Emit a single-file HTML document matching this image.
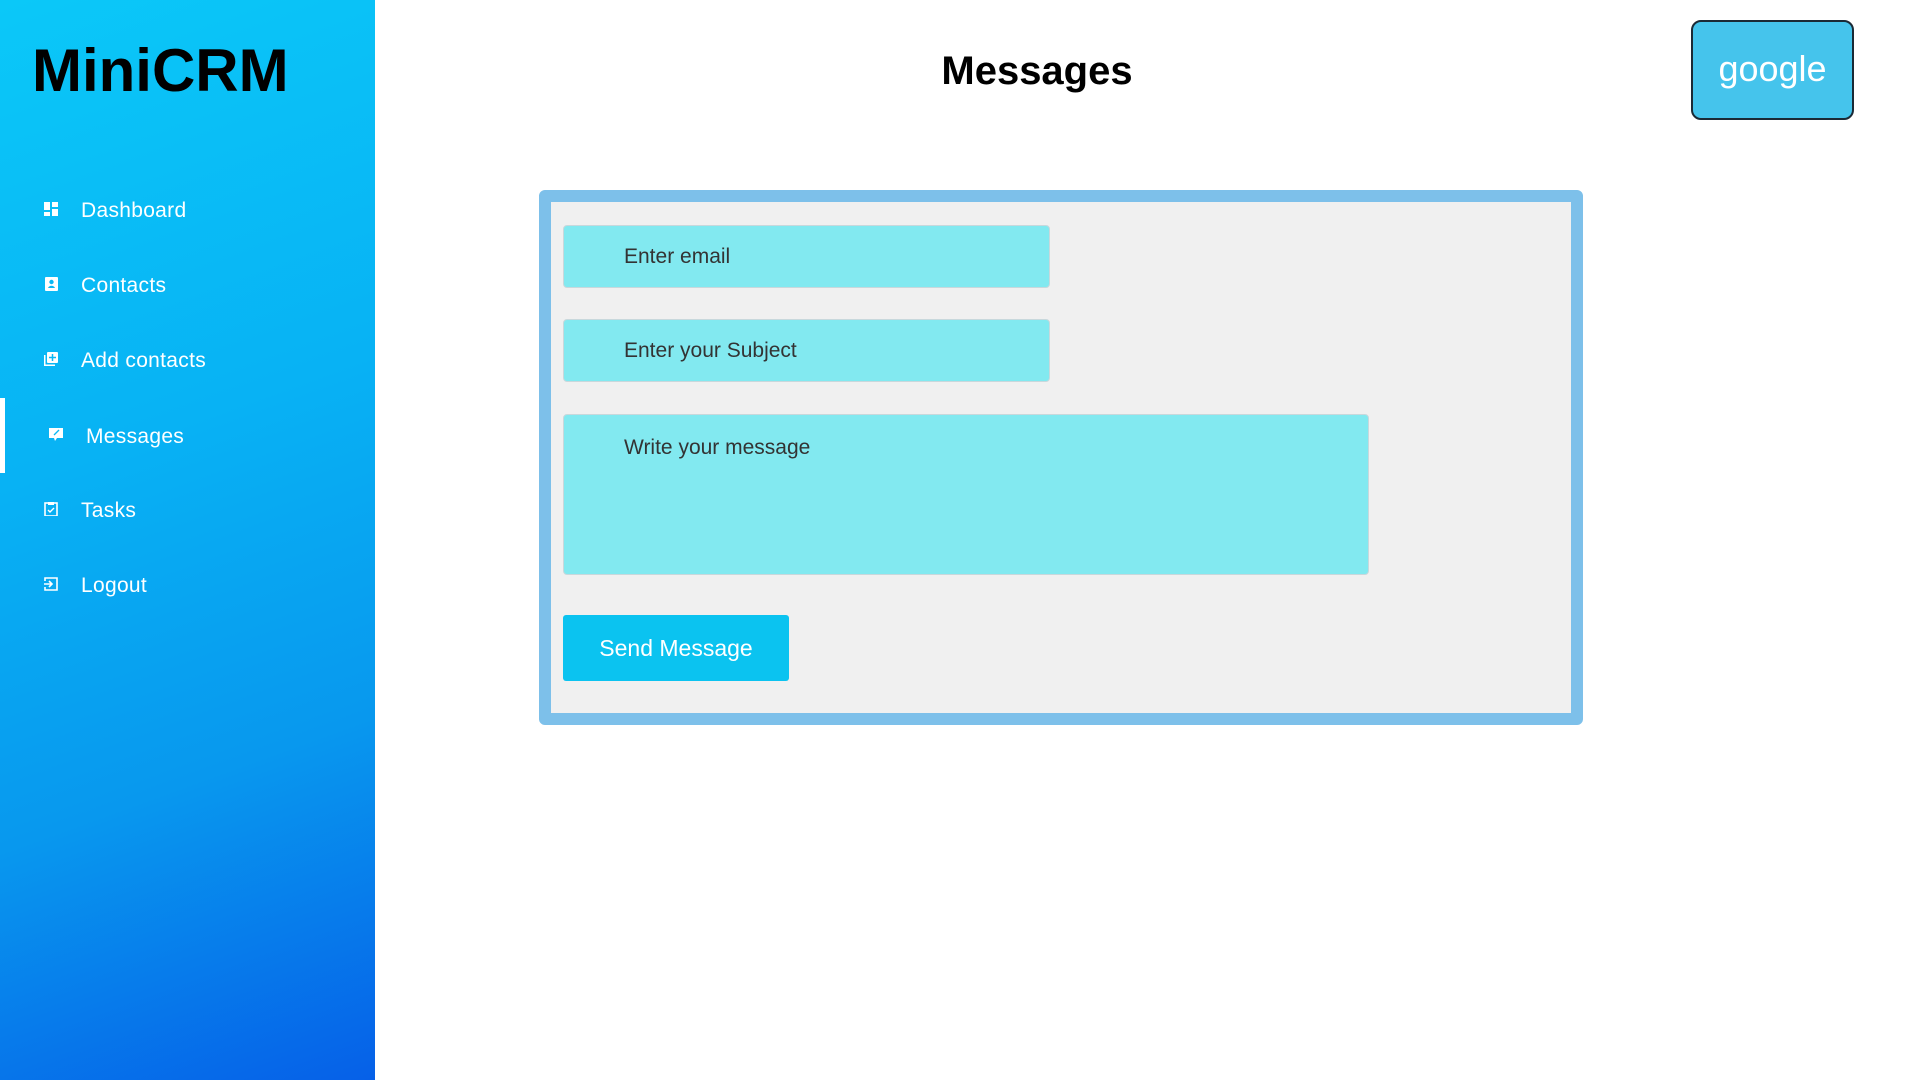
<!DOCTYPE html>
<html><head><style>
*{margin:0;padding:0;box-sizing:border-box}
body{width:1920px;height:1080px;background:#fff;font-family:"Liberation Sans",sans-serif;position:relative;overflow:hidden}
.side{position:absolute;left:0;top:0;width:375px;height:1080px;background:linear-gradient(160deg,#0bc8f8 0%,#08b2f4 40%,#0898ee 70%,#0660e8 100%)}
.logo{position:absolute;left:32px;top:36px;font-size:60px;font-weight:bold;color:#000}
.item{position:absolute;left:0;width:375px;height:40px;color:#fff;font-size:21px;letter-spacing:0.3px}
.item .ic{position:absolute;left:44px;top:11px;width:14px;height:14px}
.item span{position:absolute;left:81px;top:8px}
.bar{position:absolute;left:0;top:398px;width:5px;height:75px;background:#fff}
h1{position:absolute;left:0;width:2074px;text-align:center;top:49px;font-size:40px;font-weight:bold;color:#000}
.g{position:absolute;left:1691px;top:20px;width:163px;height:100px;background:#45c4ec;border:2px solid #1b2a36;border-radius:10px;color:#fff;font-size:36px;text-align:center;line-height:94px}
.form{position:absolute;left:539px;top:190px;width:1044px;height:535px;background:#f0f0f0;border:12px solid #7dc0ea;border-radius:6px}
.in{position:absolute;left:563px;width:487px;height:63px;background:#82e9f0;border:1px solid #c8d8dc;border-radius:4px;color:#333;font-size:21px;padding-left:60px;line-height:62px}
.ta{position:absolute;left:563px;top:414px;width:806px;height:161px;background:#82e9f0;border:1px solid #c8d8dc;border-radius:4px;color:#333;font-size:21px;padding:21px 60px}
.btn{position:absolute;left:563px;top:615px;width:226px;height:66px;background:#0bc3f0;border-radius:3px;color:#fff;font-size:23px;text-align:center;line-height:66px}
</style></head><body>
<div class="side">
<div class="logo">MiniCRM</div>
<div class="item" style="top:191px"><svg class="ic" viewBox="0 0 14 14"><rect x="0" y="0" width="6" height="8" fill="#fff"/><rect x="8" y="0" width="6" height="5" fill="#fff"/><rect x="0" y="10" width="6" height="4" fill="#fff"/><rect x="8" y="7" width="6" height="7" fill="#fff"/></svg><span>Dashboard</span></div>
<div class="item" style="top:266px"><svg class="ic" viewBox="0 0 14 14"><rect x="1" y="0" width="13" height="14" rx="1" fill="#fff"/><circle cx="7.5" cy="5" r="2.2" fill="#0ab8f5"/><path d="M4 11c1-3 6-3 7 0z" fill="#0ab8f5"/></svg><span>Contacts</span></div>
<div class="item" style="top:341px"><svg class="ic" viewBox="0 0 14 14"><path d="M0 3v11h11v-1.5H1.5V3z" fill="#fff"/><rect x="3" y="0" width="11" height="11" rx="1" fill="#fff"/><path d="M8.5 2v7M5 5.5h7" stroke="#0ab8f5" stroke-width="1.5"/></svg><span>Add contacts</span></div>
<div class="item" style="top:417px"><svg class="ic" style="left:49px" viewBox="0 0 14 14"><path d="M0 0h14v10H8l-2 3-1-3H0z" fill="#fff"/><path d="M5 7l5-5" stroke="#0ab8f5" stroke-width="1.3"/></svg><span style="left:86px">Messages</span></div>
<div class="item" style="top:491px"><svg class="ic" viewBox="0 0 14 14"><rect x="1" y="1" width="12" height="13" fill="none" stroke="#fff" stroke-width="1.6"/><rect x="4" y="0" width="6" height="3" fill="#fff"/><path d="M4 8l2 2 4-4" stroke="#fff" stroke-width="1.4" fill="none"/></svg><span>Tasks</span></div>
<div class="item" style="top:566px"><svg class="ic" viewBox="0 0 14 14"><path d="M1 4V1h12v12H1v-3" fill="none" stroke="#fff" stroke-width="1.6"/><path d="M0 7h8M5 4l3 3-3 3" stroke="#fff" stroke-width="1.6" fill="none"/></svg><span>Logout</span></div>
</div>
<div class="bar"></div>
<h1>Messages</h1>
<div class="g">google</div>
<div class="form"></div>
<div class="in" style="top:225px">Enter email</div>
<div class="in" style="top:319px">Enter your Subject</div>
<div class="ta">Write your message</div>
<div class="btn">Send Message</div>
</body></html>
